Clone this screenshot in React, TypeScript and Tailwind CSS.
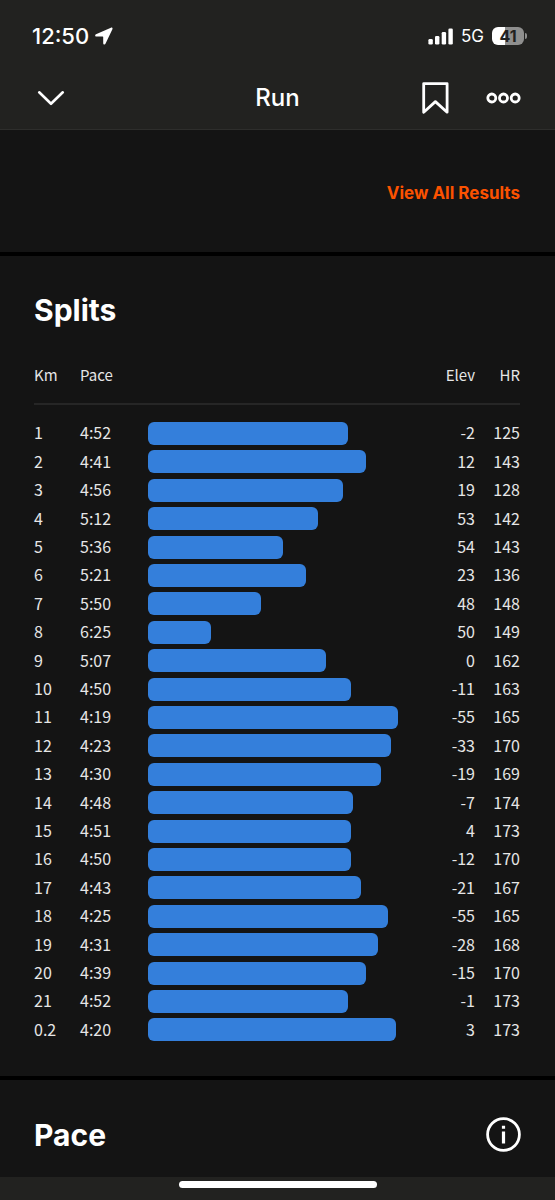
type Split = {
  km: string;
  pace: string;
  bar: number;
  elev: number;
  hr: number;
};

const splits: Split[] = [
  { km: "1", pace: "4:52", bar: 80, elev: -2, hr: 125 },
  { km: "2", pace: "4:41", bar: 87, elev: 12, hr: 143 },
  { km: "3", pace: "4:56", bar: 78, elev: 19, hr: 128 },
  { km: "4", pace: "5:12", bar: 68, elev: 53, hr: 142 },
  { km: "5", pace: "5:36", bar: 54, elev: 54, hr: 143 },
  { km: "6", pace: "5:21", bar: 63, elev: 23, hr: 136 },
  { km: "7", pace: "5:50", bar: 45, elev: 48, hr: 148 },
  { km: "8", pace: "6:25", bar: 25, elev: 50, hr: 149 },
  { km: "9", pace: "5:07", bar: 71, elev: 0, hr: 162 },
  { km: "10", pace: "4:50", bar: 81, elev: -11, hr: 163 },
  { km: "11", pace: "4:19", bar: 100, elev: -55, hr: 165 },
  { km: "12", pace: "4:23", bar: 97, elev: -33, hr: 170 },
  { km: "13", pace: "4:30", bar: 93, elev: -19, hr: 169 },
  { km: "14", pace: "4:48", bar: 82, elev: -7, hr: 174 },
  { km: "15", pace: "4:51", bar: 81, elev: 4, hr: 173 },
  { km: "16", pace: "4:50", bar: 81, elev: -12, hr: 170 },
  { km: "17", pace: "4:43", bar: 85, elev: -21, hr: 167 },
  { km: "18", pace: "4:25", bar: 96, elev: -55, hr: 165 },
  { km: "19", pace: "4:31", bar: 92, elev: -28, hr: 168 },
  { km: "20", pace: "4:39", bar: 87, elev: -15, hr: 170 },
  { km: "21", pace: "4:52", bar: 80, elev: -1, hr: 173 },
  { km: "0.2", pace: "4:20", bar: 99, elev: 3, hr: 173 },
];

function StatusBar() {
  return (
    <div className="flex h-[72px] items-center justify-between px-7">
      <div className="flex items-center gap-[6px] pl-1">
        <span className="text-[22px] leading-7 font-medium">12:50</span>
        <svg width="18" height="18" viewBox="0 0 18 18" fill="#fff">
          <path d="M15.900.7 1 7.200C-.3 7.800 0 9.500 1.300 9.500H7.600c.4 0 .6.2.6.6v6.100c0 1.400 1.800 1.700 2.400.4L17.400 2.200C17.900 1.100 17 .2 15.900.7Z" />
        </svg>
      </div>
      <div className="flex items-center gap-2">
        <svg width="25" height="17" viewBox="0 0 25 17" fill="#fff">
          <rect x="0.400" y="11" width="4.400" height="5.600" rx="1.300" />
          <rect x="7" y="8" width="4.400" height="8.600" rx="1.300" />
          <rect x="13.700" y="4" width="4.400" height="12.600" rx="1.300" />
          <rect x="20.400" y="0.400" width="4.400" height="16.200" rx="1.300" />
        </svg>
        <span className="text-[17px] leading-6">5G</span>
        <div className="flex items-center gap-px">
          <div className="flex h-[18px] w-8 items-center justify-center rounded-[6px] bg-linear-to-r from-white from-42% to-[#8f8f8e] to-42% text-base font-bold text-[#222220]">
            41
          </div>
          <div className="h-[6px] w-[2px] rounded-r-full bg-[#8f8f8e]" />
        </div>
      </div>
    </div>
  );
}

function NavBar() {
  return (
    <div className="grid h-[57px] grid-cols-[1fr_auto_1fr] items-center px-[34px] pb-[5px]">
      <button type="button" aria-label="Close" className="flex w-[34px] justify-center">
        <svg width="28" height="16" viewBox="0 0 28 16" fill="none" stroke="#fff" strokeWidth="2.600" strokeLinecap="round" strokeLinejoin="round">
          <path d="M2.200 2.300 14 13.800 25.800 2.300" />
        </svg>
      </button>
      <h1 className="text-2xl font-medium">Run</h1>
      <div className="flex items-center justify-end gap-[37px]">
        <button type="button" aria-label="Save">
          <svg width="27" height="32" viewBox="0 0 27 32" fill="none" stroke="#fff" strokeWidth="2.800" strokeLinejoin="round">
            <path d="M1.700 1.600h23.400v28.600L13.400 19.600 1.700 30.200Z" />
          </svg>
        </button>
        <button type="button" aria-label="More options">
          <svg width="35" height="12" viewBox="0 0 35 12" fill="none" stroke="#fff" strokeWidth="2.800">
            <circle cx="5.800" cy="6" r="4" />
            <circle cx="17.500" cy="6" r="4" />
            <circle cx="29.200" cy="6" r="4" />
          </svg>
        </button>
      </div>
    </div>
  );
}

function SplitsTable() {
  return (
    <table className="mt-4 w-full table-fixed text-base leading-6 text-[#e6e6e6]">
      <colgroup>
        <col className="w-[46px]" />
        <col className="w-[68px]" />
        <col />
        <col className="w-[77px]" />
        <col className="w-[45px]" />
      </colgroup>
      <thead>
        <tr className="h-[58px] border-b-2 border-[#262626] text-[15px]">
          <th scope="col" className="text-left font-normal">Km</th>
          <th scope="col" className="text-left font-normal">Pace</th>
          <td />
          <th scope="col" className="text-right font-normal">Elev</th>
          <th scope="col" className="text-right font-normal">HR</th>
        </tr>
      </thead>
      <tbody className="before:block before:h-[14px]">
        {splits.map((split) => (
          <tr key={split.km} className="h-7 nth-[5n+2]:h-[29px] nth-[5n+4]:h-[29px]">
            <td className="pb-0.5">{split.km}</td>
            <td className="pb-0.5">{split.pace}</td>
            <td>
              <div className="h-[23px] rounded-[6px] bg-[#347fdb]" style={{ width: `${split.bar}%` }} />
            </td>
            <td className="pb-0.5 text-right">{split.elev}</td>
            <td className="pb-0.5 text-right">{split.hr}</td>
          </tr>
        ))}
      </tbody>
    </table>
  );
}

export default function App() {
  return (
    <div className="flex min-h-screen flex-col bg-black font-['Inter',sans-serif] text-white">
      <header className="border-b border-[#2e2e2c] bg-[#222220]">
        <StatusBar />
        <NavBar />
      </header>

      <main className="flex grow flex-col gap-1">
        <section className="flex h-[122px] items-center justify-end bg-[#141414] px-[35px] pt-1">
          <a href="#results" className="text-[17px] leading-6 font-bold text-[#fc5200]">
            View All Results
          </a>
        </section>

        {/* Splits */}
        <section className="bg-[#141414] pt-[34px] pr-[35px] pb-8 pl-[34px] font-['Noto_Sans_CJK_SC',sans-serif]">
          <h2 className="font-['Inter',sans-serif] text-3xl leading-10 font-bold">Splits</h2>
          <SplitsTable />
        </section>

        {/* Pace */}
        <section className="flex grow items-center justify-between bg-[#141414] px-[34px] pt-3">
          <h2 className="text-3xl leading-10 font-bold">Pace</h2>
          <button type="button" aria-label="About pace">
            <svg width="35" height="35" viewBox="0 0 35 35" fill="none" stroke="#fff">
              <circle cx="17.500" cy="17.500" r="15.900" strokeWidth="2.800" />
              <path d="M17.500 14.500v12M17.500 8.800v3" strokeWidth="3.200" />
            </svg>
          </button>
        </section>
      </main>

      <footer className="flex h-[23px] justify-center bg-[#222220] pt-1">
        <div className="h-[7px] w-[198px] rounded-full bg-white" />
      </footer>
    </div>
  );
}
